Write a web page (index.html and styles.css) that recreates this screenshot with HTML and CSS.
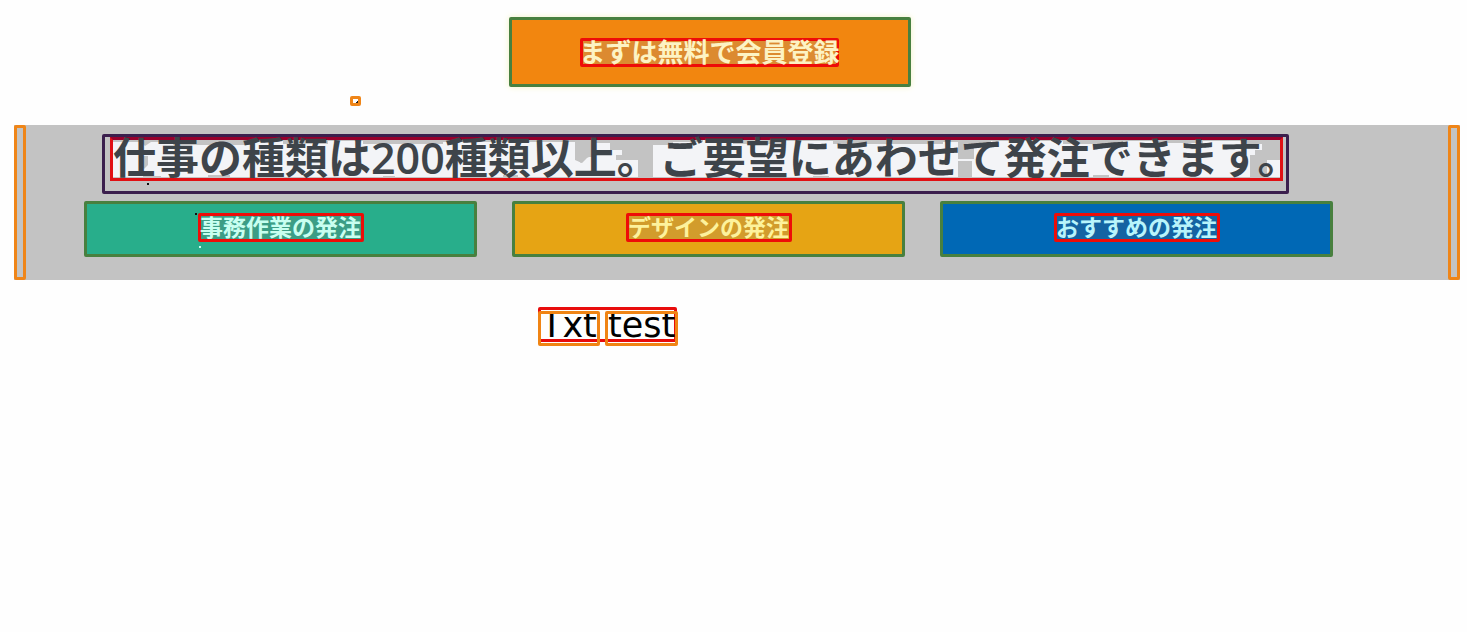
FILE: index.html
```html
<!DOCTYPE html>
<html lang="ja">
<head>
<meta charset="utf-8">
<title>会員登録</title>
<link rel="stylesheet" href="styles.css">
</head>
<body>
<header class="top">
  <button class="btn btn-signup" type="button"><span class="label">まずは無料で会員登録</span></button>
  <i class="marker"></i>
</header>
<section class="band">
  <i class="rail"></i>
  <div class="band-body">
    <div class="title-box">
      <h1 class="title">
        <svg class="title-back" viewBox="0 0 1167 38" preserveAspectRatio="none" aria-hidden="true">
          <path fill="#f3f4f7" d="M0 2H28L32 6L38 2H60V5H140V1H170V4H215V1H250V4H330V2H462V18L468 23L474 17H480V3H497V10H509V15H503V20H525V37H0ZM540 5H560V2H590V0H620V4H670V1H720V4H830V2H845V19H861V37H540ZM861 4H878V1H950V4H1010V1H1040V3H1090V1H1130V4H1149V10H1142V15H1137V37H861ZM1154 20H1167V37H1154Z"/>
          <path fill="#c3c3c3" d="M28 16H35V25L31 29L27 23ZM462 8H480V15L474 18L469 23L462 20ZM845 21H859V37H845ZM30 36h18v2h-18zM95 35h22v3h-22zM270 36h12v2h-12zM390 35h15v3h-15zM700 36h16v2h-16zM980 35h16v3h-16z"/>
        </svg>
        <span class="title-text">仕事の種類は200種類以上。ご要望にあわせて発注できます。</span>
      </h1>
      <i class="dot dot-title"></i>
    </div>
    <div class="actions">
      <button class="btn btn-office" type="button"><span class="label">事務作業の発注<i class="dot dot-above"></i><i class="dot dot-below"></i></span></button>
      <button class="btn btn-design" type="button"><span class="label">デザインの発注</span></button>
      <button class="btn btn-pick" type="button"><span class="label">おすすめの発注</span></button>
    </div>
  </div>
  <i class="rail"></i>
</section>
<p class="note"><span class="word">Txt</span> <span class="word">test</span></p>
</body>
</html>
```
FILE: styles.css
```css
* { box-sizing: border-box; }
body {
  min-height: 100vh;
  margin: 0;
  padding: 17px 7px 16px 14px;
  background: #fefefe;
  font-family: "Noto Sans CJK JP", sans-serif;
}
.top {
  position: relative;
  display: flex;
  justify-content: center;
  padding: 0 125px 38px 70px;
}
.btn {
  display: flex;
  align-items: center;
  justify-content: center;
  padding: 0;
  border: 3px solid #48803f;
  border-radius: 2px;
  font-family: inherit;
  font-weight: 700;
}
.label {
  position: relative;
  display: block;
  border: 3px solid #ee0c08;
  border-radius: 2px;
  white-space: nowrap;
}
.btn-signup {
  width: 402px;
  height: 70px;
  background: #f2860f;
  box-shadow: 0 0 6px #f3f3c4;
  color: #fdf3c4;
  font-size: 26px;
}
.btn-signup .label {
  display: flex;
  justify-content: center;
  width: 259px;
  padding-bottom: 4px;
  line-height: 19px;
  background: #dc8a30;
}
.marker {
  position: absolute;
  left: 336px;
  top: 79px;
  width: 11px;
  height: 10px;
  border: 3px solid #ef8518;
  border-radius: 2px;
  background: linear-gradient(135deg, #fff 70%, #222 70%);
}
.band {
  display: flex;
  background: #c3c3c3;
}
.rail {
  flex: none;
  width: 12px;
  border: 3px solid #ef8518;
  border-radius: 2px;
}
.band-body {
  flex: 1;
  min-width: 0;
  padding: 9px 115px 23px 58px;
}
.title-box {
  position: relative;
  margin: 0 44px 7px 18px;
  padding: 0 3px 10px 5px;
  border: 3px solid #3b1f4d;
  border-radius: 2px;
}
.title {
  position: relative;
  margin: 0;
  padding-bottom: 2px;
  border: 3px solid #e01014;
  border-top-color: #98002c;
  color: #3e444a;
  font-family: "Open Sans", "Noto Sans CJK JP", sans-serif;
  font-size: 43px;
  font-weight: 600;
  line-height: 36px;
  white-space: nowrap;
}
.title-back {
  position: absolute;
  inset: 0;
  width: 100%;
  height: 100%;
}
.title-text { position: relative; }
.actions {
  display: grid;
  grid-template-columns: repeat(3, 1fr);
  gap: 35px;
}
.actions .btn {
  height: 56px;
  padding-bottom: 3px;
  font-size: 23px;
}
.actions .label {
  display: flex;
  justify-content: center;
  width: 166px;
  padding-bottom: 2px;
  line-height: 21px;
}
.btn-office { background: #28ae8b; color: #c8fff0; }
.btn-office .label { background: #3c9d85; }
.btn-design { background: #e6a414; color: #fdf29c; }
.btn-design .label { background: #d29c2c; }
.btn-pick { background: #0068b5; color: #b8f4fb; }
.btn-pick .label { background: #1463a2; }
.dot {
  position: absolute;
  width: 2px;
  height: 2px;
  background: #111;
}
.dot-title { left: 42px; bottom: 6px; }
.dot-above { left: -6px; top: -3px; }
.dot-below { left: -2px; bottom: -9px; background: #c8fff0; }
.note {
  width: 139px;
  margin: 27px 0 0 524px;
  padding-top: 2px;
  border: 3px solid #e80c0c;
  border-radius: 2px;
  color: #000;
  font-family: "DejaVu Sans", sans-serif;
  font-size: 35px;
  line-height: 27px;
  white-space: nowrap;
}
.word {
  position: relative;
  display: inline-block;
}
.word::after {
  content: "";
  position: absolute;
  inset: -1px -3px -7px;
  border: 3px solid #f08414;
  border-radius: 2px;
}
```
